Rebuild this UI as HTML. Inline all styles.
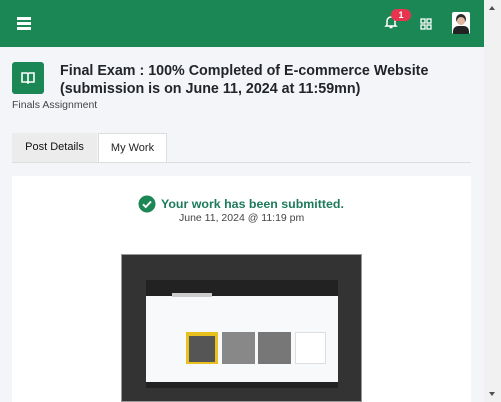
<!DOCTYPE html><html><head><style>
body{margin:0;width:501px;height:402px;overflow:hidden;background:#f4f5f9;font-family:"Liberation Sans",sans-serif;position:relative}
.hdr{position:absolute;left:0;top:0;width:484px;height:47px;background:#1a8754}
.sb{position:absolute;left:484px;top:0;width:17px;height:402px;background:#f1f1f1}
.thumb{position:absolute;left:486px;top:68px;width:13px;height:64px;background:#c1c1c1}
.a{position:absolute}
</style></head><body>
<div class="hdr">
 <div class="a" style="left:17px;top:17px;width:14px;height:3px;background:#fff;box-shadow:0 5px #fff,0 10px #fff"></div>
 <svg class="a" style="left:383px;top:14px" width="16" height="16" viewBox="0 0 16 16"><path d="M4 11V7a4 4 0 0 1 8 0v4l1 1H3z M6.5 13.5h3" fill="none" stroke="#fff" stroke-width="1.5"/></svg>
 <div class="a" style="left:391px;top:9px;width:20px;height:12px;border-radius:6px;background:#e8344e;color:#fff;font-size:9px;font-weight:bold;text-align:center;line-height:12px">1</div>
 <svg class="a" style="left:420px;top:18px" width="12" height="12" viewBox="0 0 12 12"><g fill="none" stroke="#fff" stroke-width="1.3"><rect x="1" y="1" width="4" height="4"/><rect x="7" y="1" width="4" height="4"/><rect x="1" y="7" width="4" height="4"/><rect x="7" y="7" width="4" height="4"/></g></svg>
 <div class="a" style="left:452px;top:12px;width:18px;height:22px;background:#fff;border-radius:2px;overflow:hidden"><div class="a" style="left:4px;top:2px;width:10px;height:10px;border-radius:5px;background:#2a2a2a"></div><div class="a" style="left:5px;top:5px;width:8px;height:8px;border-radius:4px;background:#e0b9a0"></div><div class="a" style="left:1px;top:14px;width:16px;height:10px;border-radius:5px 5px 0 0;background:#222"></div></div>
</div>
<div class="sb"><div class="thumb"></div><div class="a" style="left:5px;top:6px;border:3.5px solid transparent;border-bottom:4px solid #505050;border-top:0"></div><div class="a" style="left:5px;top:392px;border:3.5px solid transparent;border-top:4px solid #505050;border-bottom:0"></div></div>
<div class="a" style="left:12px;top:62px;width:32px;height:32px;background:#1a8754;border-radius:3px"><svg class="a" style="left:9px;top:10px" width="14" height="12" viewBox="0 0 14 12"><path d="M1 1h5l1 1 1-1h5v9H8l-1 1-1-1H1z M7 2v9" fill="none" stroke="#fff" stroke-width="1.6"/></svg></div>
<div class="a" style="left:60px;top:62px;font-size:14.3px;font-weight:bold;color:#212529;line-height:18px">Final Exam : 100% Completed of E-commerce Website<br>(submission is on June 11, 2024 at 11:59mn)</div>
<div class="a" style="left:12px;top:99px;font-size:10.5px;color:#444">Finals Assignment</div>
<div class="a" style="left:12px;top:133px;width:85px;height:29px;background:#ececec;font-size:11px;color:#111;text-align:center;line-height:28px">Post Details</div>
<div class="a" style="left:98px;top:133px;width:69px;height:30px;background:#fff;border:1px solid #ddd;border-bottom:0;box-sizing:border-box;font-size:11px;color:#222;text-align:center;line-height:28px">My Work</div>
<div class="a" style="left:12px;top:162px;width:459px;height:1px;background:#ddd"></div>
<div class="a" style="left:12px;top:176px;width:459px;height:226px;background:#fff"></div>
<svg class="a" style="left:138px;top:195px" width="18" height="18" viewBox="0 0 18 18"><circle cx="9" cy="9" r="8.5" fill="#1a8754"/><path d="M5 9.3l2.8 2.7L13 6.5" fill="none" stroke="#fff" stroke-width="2"/></svg>
<div class="a" style="left:161px;top:197px;font-size:12.4px;font-weight:bold;color:#1d7a5c">Your work has been submitted.</div>
<div class="a" style="left:179px;top:212px;font-size:10.5px;color:#444">June 11, 2024 @ 11:19 pm</div>
<div class="a" style="left:121px;top:254px;width:241px;height:148px;background:#333;border:1px solid #999;box-sizing:border-box"></div>
<div class="a" style="left:146px;top:280px;width:192px;height:108px;background:#f8f9fb">
 <div class="a" style="left:0;top:0;width:192px;height:16px;background:#222"></div>
 <div class="a" style="left:0;top:102px;width:192px;height:6px;background:#222"></div>
 <div class="a" style="left:26px;top:13px;width:40px;height:4px;background:#ccc"></div>
 <div class="a" style="left:40px;top:52px;width:32px;height:32px;background:#e8c020"></div>
 <div class="a" style="left:43px;top:56px;width:26px;height:26px;background:#555"></div>
 <div class="a" style="left:76px;top:52px;width:33px;height:32px;background:#888"></div>
 <div class="a" style="left:112px;top:52px;width:33px;height:32px;background:#777"></div>
 <div class="a" style="left:149px;top:52px;width:31px;height:32px;background:#fff;border:1px solid #ddd;box-sizing:border-box"></div>
</div>
</body></html>
